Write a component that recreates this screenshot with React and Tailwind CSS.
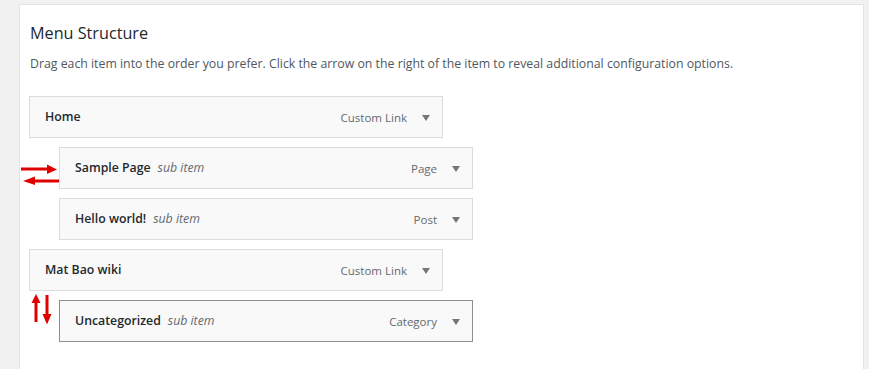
import React from "react";

function Caret() {
  return (
    <svg width="8" height="6" viewBox="0 0 8 6" className="shrink-0">
      <path d="M0 0 H8 L4 6 Z" fill="#72777c" />
    </svg>
  );
}

function Item({ title, sub, type, indent, active, children }) {
  return (
    <div className={`relative ${indent ? "ml-[30px]" : ""}`}>
      {children}
      <div
        className={`flex h-[42px] w-[414px] items-center border bg-[#f9f9f9] pl-[15px] pr-[12px] pt-px ${
          active ? "border-[#8c8f94]" : "border-[#dcdcde]"
        }`}
      >
        <span className="text-[12.3px] font-semibold text-[#23282d]">{title}</span>
        {sub && <span className="ml-[7px] text-[12.3px] italic text-[#646970]">sub item</span>}
        <span className="ml-auto text-[11.5px] text-[#646970]">{type}</span>
        <span className="ml-[15px]">
          <Caret />
        </span>
      </div>
    </div>
  );
}

export default function App() {
  return (
    <div
      className="min-h-screen bg-[#f1f1f1] pl-[19px] pr-[5px] pt-[4px]"
      style={{ fontFamily: '"Open Sans", "Liberation Sans", sans-serif' }}
    >
      <div className="h-[365px] border-l border-r border-t border-[#e2e4e7] bg-white pl-[9px] pt-[17px]">
        <h2 className="ml-px text-[16.2px] leading-[23px] text-[#23282d]">Menu Structure</h2>
        <p className="ml-px mt-[10px] text-[12.3px] leading-[18px] text-[#50575e]">
          Drag each item into the order you prefer. Click the arrow on the right of the item to reveal additional
          configuration options.
        </p>
        <div className="mt-[23px] flex flex-col gap-[9px]">
          <Item title="Home" type="Custom Link" />
          <Item title="Sample Page" sub type="Page" indent>
            <svg className="absolute left-[-40px] top-[14px]" width="40" height="24" viewBox="0 0 40 24">
              <path d="M2 8 H30" stroke="#e00000" strokeWidth="3" />
              <path d="M28 3.5 L38 8.5 L28 13 Z" fill="#e00000" />
              <path d="M14 20 H40" stroke="#e00000" strokeWidth="3" />
              <path d="M16 15.5 L4 20 L16 24 Z" fill="#e00000" />
            </svg>
          </Item>
          <Item title="Hello world!" sub type="Post" indent />
          <Item title="Mat Bao wiki" type="Custom Link" />
          <Item title="Uncategorized" sub type="Category" indent active>
            <svg className="absolute left-[-29px] top-[-7px]" width="24" height="32" viewBox="0 0 24 32">
              <path d="M6 8 V29" stroke="#e00000" strokeWidth="3" />
              <path d="M1.5 10 L6 1 L10.5 10 Z" fill="#e00000" />
              <path d="M17 2 V23" stroke="#e00000" strokeWidth="3" />
              <path d="M12.5 21 L17 31.5 L21.5 21 Z" fill="#e00000" />
            </svg>
          </Item>
        </div>
      </div>
    </div>
  );
}
